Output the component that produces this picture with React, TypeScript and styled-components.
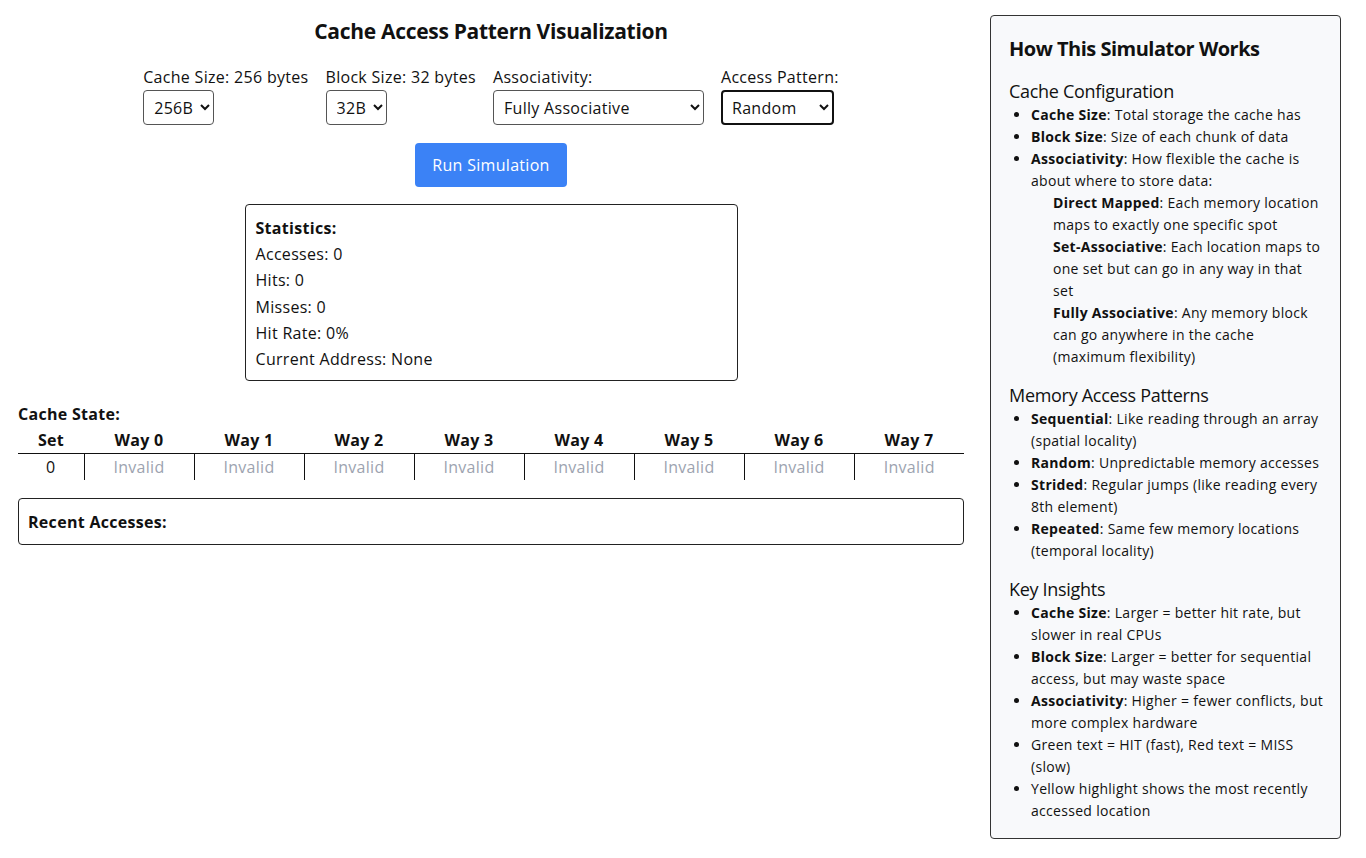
import React, { useState } from 'react';
import styled, { createGlobalStyle } from 'styled-components';

const GlobalStyle = createGlobalStyle`
  body {
    margin: 0;
    background: #fff;
    color: #111;
    font-family: "Open Sans", "Liberation Sans", sans-serif;
    line-height: 1.6;
    letter-spacing: 0.3px;
  }
`;

const Page = styled.div`
  display: flex;
  align-items: flex-start;
  gap: 26px;
  padding: 15px 25px 20px 18px;
`;

const Main = styled.div`
  flex: 1;
  display: flex;
  flex-direction: column;
  align-items: center;
  min-width: 0;
  font-size: 16px;
  line-height: 26px;
`;

const Title = styled.h2`
  margin: 0;
  font-size: 21px;
  line-height: 32px;
  font-weight: 700;
  letter-spacing: -0.3px;
`;

const Controls = styled.div`
  display: flex;
  justify-content: center;
  gap: 17px;
  margin-top: 17px;
`;

const ControlGroup = styled.div`
  display: flex;
  flex-direction: column;
  align-items: flex-start;
`;

const ControlLabel = styled.label`
  line-height: 26px;
  white-space: nowrap;
`;

const Select = styled.select<{ $width: number; $focused?: boolean }>`
  width: ${props => props.$width}px;
  height: 35px;
  padding: 0 4px 0 ${props => props.$focused ? 5 : 6}px;
  font-family: inherit;
  font-size: 16px;
  letter-spacing: 0.3px;
  color: #111;
  background: #fff;
  border: ${props => props.$focused ? '2px solid #111' : '1px solid #555'};
  border-radius: 4px;
  outline: none;
`;

const RunButton = styled.button`
  margin-top: 18px;
  padding: 9px 17px;
  font-family: inherit;
  font-size: 16px;
  line-height: 26px;
  letter-spacing: 0.3px;
  color: #fff;
  background: #3b82f6;
  border: none;
  border-radius: 4px;
  cursor: pointer;
`;

const StatsBox = styled.div`
  width: 493px;
  box-sizing: border-box;
  margin-top: 17px;
  padding: 10px 10px 8px;
  border: 1px solid #222;
  border-radius: 4px;
  line-height: 26.2px;
`;

const StatsTitle = styled.div`
  font-weight: 700;
`;

const StatLine = styled.div``;

const CacheSection = styled.div`
  align-self: stretch;
  margin-top: 20px;
`;

const SectionLabel = styled.div`
  font-weight: 700;
`;

const CacheTable = styled.table`
  width: 100%;
  table-layout: fixed;
  border-collapse: collapse;
  font-size: 16px;
  line-height: 26px;
`;

const HeadCell = styled.th`
  padding: 0;
  font-weight: 700;
  text-align: center;
  border-bottom: 1px solid #111;
`;

const BodyCell = styled.td<{ $empty?: boolean; $first?: boolean }>`
  padding: 0;
  text-align: center;
  color: ${props => props.$empty ? '#9ca3af' : '#111'};
  border-left: ${props => props.$first ? 'none' : '1px solid #111'};
`;

const RecentBox = styled.div`
  align-self: stretch;
  margin-top: 18px;
  padding: 9.5px 9px;
  border: 1px solid #222;
  border-radius: 4px;
  font-weight: 700;
`;

const Sidebar = styled.aside`
  width: 351px;
  flex-shrink: 0;
  box-sizing: border-box;
  padding: 17px 16px 16px 18px;
  background: #f8f9fb;
  border: 1px solid #333;
  border-radius: 4px;
  font-size: 14px;
  line-height: 22px;
`;

const SidebarTitle = styled.h3`
  margin: 0;
  font-size: 20px;
  line-height: 32px;
  font-weight: 700;
  letter-spacing: -0.5px;
`;

const SidebarHeading = styled.h4<{ $first?: boolean }>`
  margin: ${props => props.$first ? '14px' : '15px'} 0 1px;
  font-size: 18px;
  line-height: 24px;
  font-weight: 400;
  letter-spacing: -0.3px;
`;

const InfoList = styled.ul`
  margin: 0;
  padding-left: 22px;
`;

const SubList = styled.ul`
  margin: 0;
  padding-left: 22px;
  list-style: none;
`;

const cacheSizes = [128, 256, 512, 1024];
const blockSizes = [16, 32, 64];
const associativities = ['Direct Mapped', '2-Way Set Associative', '4-Way Set Associative', 'Fully Associative'];
const patterns = ['Sequential', 'Random', 'Strided', 'Repeated'];

export default function App() {
  const [cacheSize, setCacheSize] = useState(256);
  const [blockSize, setBlockSize] = useState(32);
  const [assoc, setAssoc] = useState('Fully Associative');
  const [pattern, setPattern] = useState('Random');

  const blocks = cacheSize / blockSize;
  const ways = assoc === 'Direct Mapped' ? 1
    : assoc === '2-Way Set Associative' ? 2
    : assoc === '4-Way Set Associative' ? 4
    : blocks;
  const sets = Math.max(1, blocks / ways);

  return (
    <>
      <GlobalStyle />
      <Page>
        <Main>
          <Title>Cache Access Pattern Visualization</Title>
          <Controls>
            <ControlGroup>
              <ControlLabel>Cache Size: {cacheSize} bytes</ControlLabel>
              <Select $width={71} value={cacheSize} onChange={e => setCacheSize(Number(e.target.value))}>
                {cacheSizes.map(s => <option key={s} value={s}>{s}B</option>)}
              </Select>
            </ControlGroup>
            <ControlGroup>
              <ControlLabel>Block Size: {blockSize} bytes</ControlLabel>
              <Select $width={61} value={blockSize} onChange={e => setBlockSize(Number(e.target.value))}>
                {blockSizes.map(s => <option key={s} value={s}>{s}B</option>)}
              </Select>
            </ControlGroup>
            <ControlGroup>
              <ControlLabel>Associativity:</ControlLabel>
              <Select $width={211} value={assoc} onChange={e => setAssoc(e.target.value)}>
                {associativities.map(a => <option key={a} value={a}>{a}</option>)}
              </Select>
            </ControlGroup>
            <ControlGroup>
              <ControlLabel>Access Pattern:</ControlLabel>
              <Select $width={113} $focused value={pattern} onChange={e => setPattern(e.target.value)}>
                {patterns.map(p => <option key={p} value={p}>{p}</option>)}
              </Select>
            </ControlGroup>
          </Controls>

          <RunButton>Run Simulation</RunButton>

          <StatsBox>
            <StatsTitle>Statistics:</StatsTitle>
            <StatLine>Accesses: 0</StatLine>
            <StatLine>Hits: 0</StatLine>
            <StatLine>Misses: 0</StatLine>
            <StatLine>Hit Rate: 0%</StatLine>
            <StatLine>Current Address: None</StatLine>
          </StatsBox>

          <CacheSection>
            <SectionLabel>Cache State:</SectionLabel>
            <CacheTable>
              <colgroup>
                <col style={{ width: 66 }} />
                {Array.from({ length: ways }, (_, i) => <col key={i} />)}
              </colgroup>
              <thead>
                <tr>
                  <HeadCell>Set</HeadCell>
                  {Array.from({ length: ways }, (_, i) => <HeadCell key={i}>Way {i}</HeadCell>)}
                </tr>
              </thead>
              <tbody>
                {Array.from({ length: sets }, (_, s) => (
                  <tr key={s}>
                    <BodyCell $first>{s}</BodyCell>
                    {Array.from({ length: ways }, (_, w) => <BodyCell key={w} $empty>Invalid</BodyCell>)}
                  </tr>
                ))}
              </tbody>
            </CacheTable>
          </CacheSection>

          <RecentBox>Recent Accesses:</RecentBox>
        </Main>

        <Sidebar>
          <SidebarTitle>How This Simulator Works</SidebarTitle>

          <SidebarHeading $first>Cache Configuration</SidebarHeading>
          <InfoList>
            <li><strong>Cache Size</strong>: Total storage the cache has</li>
            <li><strong>Block Size</strong>: Size of each chunk of data</li>
            <li>
              <strong>Associativity</strong>: How flexible the cache is about where to store data:
              <SubList>
                <li><strong>Direct Mapped</strong>: Each memory location maps to exactly one specific spot</li>
                <li><strong>Set-Associative</strong>: Each location maps to one set but can go in any way in that set</li>
                <li><strong>Fully Associative</strong>: Any memory block can go anywhere in the cache (maximum flexibility)</li>
              </SubList>
            </li>
          </InfoList>

          <SidebarHeading>Memory Access Patterns</SidebarHeading>
          <InfoList>
            <li><strong>Sequential</strong>: Like reading through an array (spatial locality)</li>
            <li><strong>Random</strong>: Unpredictable memory accesses</li>
            <li><strong>Strided</strong>: Regular jumps (like reading every 8th element)</li>
            <li><strong>Repeated</strong>: Same few memory locations (temporal locality)</li>
          </InfoList>

          <SidebarHeading>Key Insights</SidebarHeading>
          <InfoList>
            <li><strong>Cache Size</strong>: Larger = better hit rate, but slower in real CPUs</li>
            <li><strong>Block Size</strong>: Larger = better for sequential access, but may waste space</li>
            <li><strong>Associativity</strong>: Higher = fewer conflicts, but more complex hardware</li>
            <li>Green text = HIT (fast), Red text = MISS (slow)</li>
            <li>Yellow highlight shows the most recently accessed location</li>
          </InfoList>
        </Sidebar>
      </Page>
    </>
  );
}
